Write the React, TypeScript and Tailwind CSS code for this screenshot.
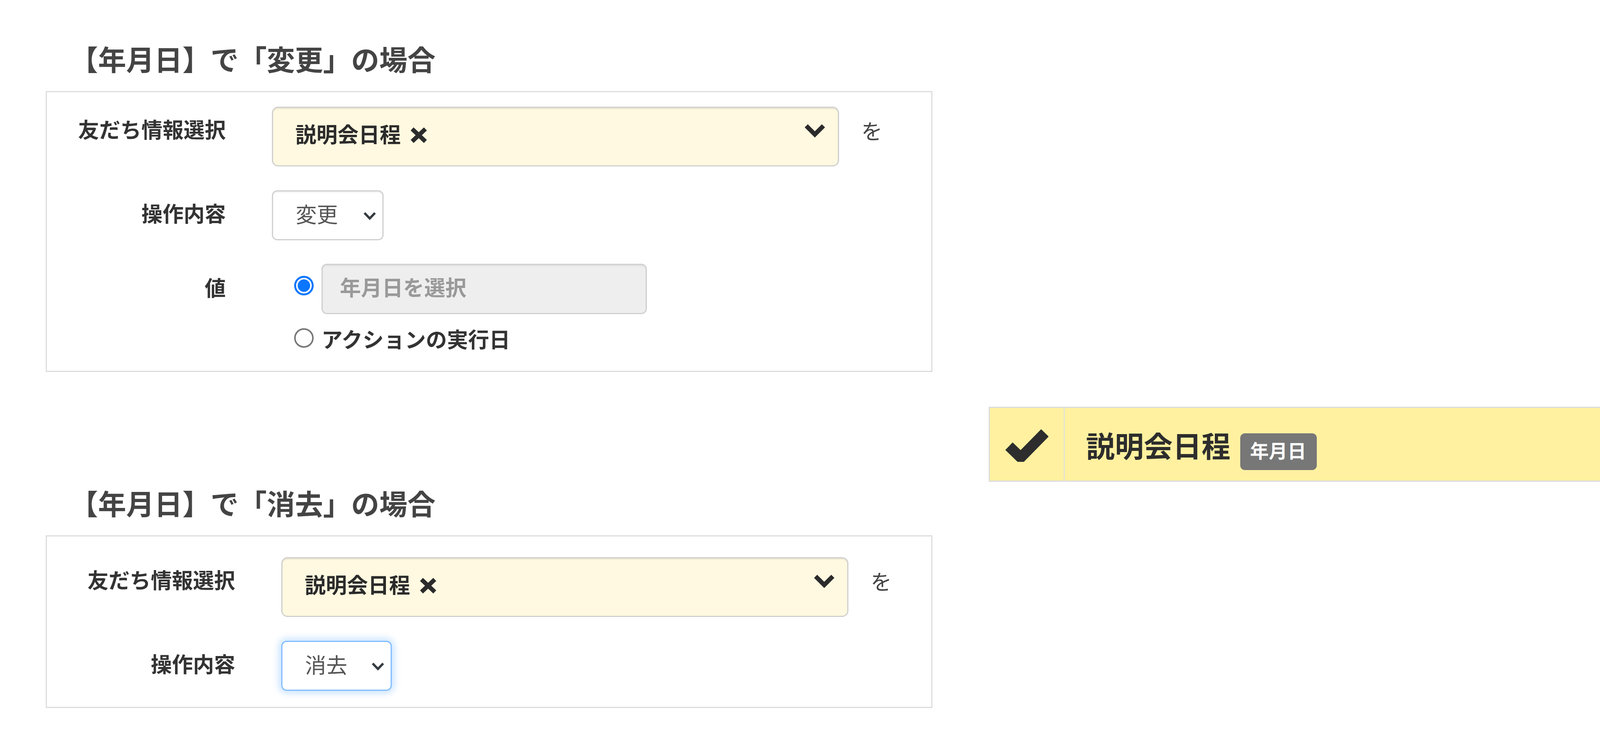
const font = "font-['Noto_Sans_CJK_JP','Noto_Sans',sans-serif]";

function ChevronBold() {
  return (
    <svg width="52" height="36" viewBox="0 0 52 36" className="shrink-0">
      <polygon points="0,9 8,1 26,19 44,1 52,9 26,35" fill="#2b2b2b" />
    </svg>
  );
}

function ChevronThin() {
  return (
    <svg width="33" height="21" viewBox="0 0 33 21" className="shrink-0">
      <polyline points="3,3 16.5,17 30,3" fill="none" stroke="#343a40" strokeWidth="6" />
    </svg>
  );
}

function Times() {
  return (
    <svg width="46" height="42" viewBox="0 0 46 42" className="shrink-0">
      <path d="M6 5 L40 37 M40 5 L6 37" stroke="#2b2b2b" strokeWidth="11" strokeLinecap="butt" />
    </svg>
  );
}

function FieldSelect() {
  return (
    <div className="w-[1452px] h-[153px] shrink-0 flex items-start justify-between rounded-[16px] border-[3px] border-[#d0d0d0] bg-[#fef9e0] shadow-[inset_0_3px_3px_rgba(0,0,0,0.08)] pl-[57px] pr-[33px]">
      <div className="flex items-start pt-[39px]">
        <span className="text-[54px] leading-[54px] font-bold text-[#2b2b2b]">説明会日程</span>
        <span className="ml-[23px] mt-[10px]">
          <Times />
        </span>
      </div>
      <div className="pt-[41px]">
        <ChevronBold />
      </div>
    </div>
  );
}

function OpSelect({ value, focused }: { value: string; focused?: boolean }) {
  return (
    <div
      className={`h-[128px] shrink-0 flex items-start justify-between rounded-[14px] border-[3px] bg-white pl-[58px] pr-[16px] ${
        focused
          ? 'w-[283px] border-[#80bdff] shadow-[0_0_18px_6px_rgba(0,123,255,0.22)]'
          : 'w-[286px] border-[#d0d0d0] shadow-[inset_0_3px_3px_rgba(0,0,0,0.06)]'
      }`}
    >
      <span className="pt-[30px] text-[54px] leading-[54px] text-[#555]">{value}</span>
      <span className="pt-[52px]">
        <ChevronThin />
      </span>
    </div>
  );
}

function Label({ text, width, pt }: { text: string; width: string; pt: string }) {
  return (
    <div className={`${width} ${pt} shrink-0 text-right text-[54px] leading-[54px] font-bold text-[#333]`}>
      {text}
    </div>
  );
}

function FriendRow({ labelWidth }: { labelWidth: string }) {
  return (
    <div className="flex items-start">
      <Label text="友だち情報選択" width={labelWidth} pt="pt-[30px]" />
      <div className="ml-[118px] flex items-start">
        <FieldSelect />
        <span className="ml-[57px] pt-[34px] text-[54px] leading-[54px] text-[#444]">を</span>
      </div>
    </div>
  );
}

export default function App() {
  return (
    <div className={`${font} bg-white min-h-[1876px] w-[4149px] flex items-start`}>
      <div className="ml-[117px] w-[2270px] shrink-0">
        <h2 className="mt-[113px] pl-[62px] text-[72px] leading-[72px] font-bold text-[#444]">
          【年月日】で「変更」の場合
        </h2>
        <div className="mt-[48px] border-[3px] border-[#dddddd] pt-[37px] pb-[55px]">
          <FriendRow labelWidth="w-[458px]" />

          <div className="mt-[61px] flex items-start">
            <Label text="操作内容" width="w-[458px]" pt="pt-[31px]" />
            <div className="ml-[118px]">
              <OpSelect value="変更" />
            </div>
          </div>

          <div className="mt-[60px] flex items-start">
            <Label text="値" width="w-[458px]" pt="pt-[33px]" />
            <div className="ml-[118px] pl-[57px] flex flex-col">
              <div className="flex items-start">
                <div className="mt-[31px] w-[50px] h-[50px] shrink-0 rounded-full border-[5px] border-[#0b76ff] bg-white p-[4px]">
                  <div className="w-full h-full rounded-full bg-[#0b76ff]" />
                </div>
                <div className="ml-[20px] w-[833px] h-[129px] rounded-[14px] border-[3px] border-[#d0d0d0] bg-[#eeeeee] shadow-[inset_0_3px_3px_rgba(0,0,0,0.06)] pl-[44px] pt-[29px]">
                  <span className="text-[54px] leading-[54px] font-bold text-[#999]">年月日を選択</span>
                </div>
              </div>
              <div className="mt-[36px] flex items-start">
                <div className="w-[50px] h-[50px] shrink-0 rounded-full border-[4px] border-[#777] bg-white" />
                <span className="ml-[20px] text-[54px] leading-[54px] font-bold text-[#333]">アクションの実行日</span>
              </div>
            </div>
          </div>
        </div>

        <h2 className="mt-[298px] pl-[62px] text-[72px] leading-[72px] font-bold text-[#444]">
          【年月日】で「消去」の場合
        </h2>
        <div className="mt-[48px] border-[3px] border-[#dddddd] pt-[53px] pb-[41px]">
          <FriendRow labelWidth="w-[482px]" />
          <div className="mt-[61px] flex items-start">
            <Label text="操作内容" width="w-[482px]" pt="pt-[31px]" />
            <div className="ml-[118px]">
              <OpSelect value="消去" focused />
            </div>
          </div>
        </div>
      </div>

      <div className="ml-[144px] mt-[1041px] flex-1 h-[192px] flex border-[3px] border-[#dcdcdc] bg-[#fff1a0]">
        <div className="w-[192px] shrink-0 border-r-[3px] border-[#e2e2d4] flex items-center justify-center">
          <svg width="110" height="90" viewBox="0 0 110 90">
            <polyline points="9,50 39,79 101,16" fill="none" stroke="#2d2d2d" strokeWidth="27" strokeLinejoin="miter" />
          </svg>
        </div>
        <div className="pl-[54px] pt-[57px] flex items-start">
          <span className="text-[74px] leading-[74px] font-bold text-[#2d2d2d]">説明会日程</span>
          <span className="ml-[25px] mt-[8px] w-[196px] h-[94px] rounded-[12px] bg-[#777] pl-[25px] pt-[18px] text-[48px] leading-[48px] font-bold text-white">
            年月日
          </span>
        </div>
      </div>
    </div>
  );
}
